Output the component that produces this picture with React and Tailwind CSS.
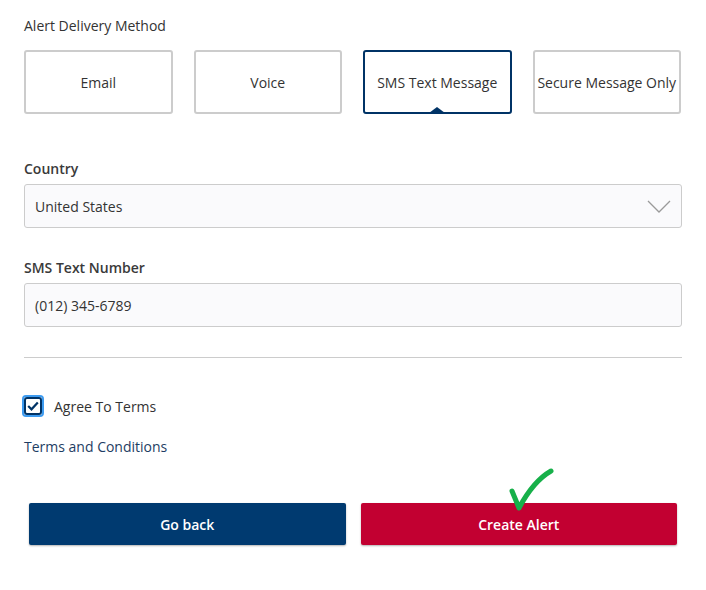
import React, { useState } from 'react';

const methods = ['Email', 'Voice', 'SMS Text Message', 'Secure Message Only'];

const App = () => {
  const [method, setMethod] = useState('SMS Text Message');
  const [agree, setAgree] = useState(true);

  return (
    <div className="w-[706px] h-[590px] bg-white text-[#333333] font-['Open_Sans',sans-serif]">
      <div className="px-6 pt-[16px]">
        <div className="text-[14px] leading-5 h-5">Alert Delivery Method</div>

        {/* Choix du mode de livraison */}
        <div className="mt-[14px] flex gap-[21px] pr-[1px]">
          {methods.map(m => {
            const active = m === method;
            return (
              <button
                key={m}
                onClick={() => setMethod(m)}
                className={
                  active
                    ? 'relative w-[149px] h-[64px] rounded-[3px] border-2 border-[#003366] bg-white text-[14px] text-[#333333] whitespace-nowrap'
                    : 'relative w-[149px] h-[64px] rounded-[3px] border-2 border-[#cccccc] bg-white text-[14px] text-[#333333] whitespace-nowrap'
                }
              >
                {m}
                {active && (
                  <span className="absolute left-1/2 -translate-x-1/2 bottom-[-1px] w-0 h-0 border-l-[8px] border-r-[8px] border-b-[6px] border-l-transparent border-r-transparent border-b-[#003366]" />
                )}
              </button>
            );
          })}
        </div>

        {/* Pays */}
        <div className="mt-[45px] text-[14px] leading-5 h-5 font-semibold text-[#3a3a3a]">Country</div>
        <div className="mt-[5px] h-[44px] rounded-[3px] border border-[#cccccc] bg-[#fafafc] flex items-center justify-between pl-[10px] pr-[10px]">
          <span className="text-[14px]">United States</span>
          <svg width="24" height="13" viewBox="0 0 24 13" fill="none">
            <path d="M1 1 L12 12 L23 1" stroke="#9a9a9a" strokeWidth="1.3" />
          </svg>
        </div>

        {/* Numéro SMS */}
        <div className="mt-[30px] text-[14px] leading-5 h-5 font-semibold text-[#3a3a3a]">SMS Text Number</div>
        <div className="mt-[5px] h-[44px] rounded-[3px] border border-[#cccccc] bg-[#fafafc] flex items-center pl-[10px]">
          <span className="text-[14px]">(012) 345-6789</span>
        </div>

        <div className="mt-[30px] h-px bg-[#cccccc]" />

        {/* Conditions */}
        <div className="mt-[37px] flex items-center">
          <button
            onClick={() => setAgree(!agree)}
            className="w-[22px] h-[22px] -ml-[2px] rounded-[4px] border-2 border-[#3d9bf0] flex items-center justify-center"
          >
            <span className="w-[18px] h-[18px] rounded-[3px] border-2 border-[#003366] bg-white flex items-center justify-center">
              {agree && (
                <svg width="12" height="10" viewBox="0 0 12 10" fill="none">
                  <path d="M1.2 5 L4.5 8.3 L10.8 1.5" stroke="#003366" strokeWidth="2.2" />
                </svg>
              )}
            </span>
          </button>
          <span className="ml-[10px] text-[14px]">Agree To Terms</span>
        </div>
        <div className="mt-[20px] text-[14px] leading-5 text-[#1d3d63]">Terms and Conditions</div>

        {/* Boutons */}
        <div className="mt-[46px] px-[5px] flex gap-[15px]">
          <button className="flex-1 h-[42px] rounded-[2px] bg-[#003a70] text-white text-[14px] font-semibold shadow-[0_1px_2px_rgba(0,0,0,0.3)]">
            Go back
          </button>
          <button className="relative flex-1 h-[42px] rounded-[2px] bg-[#c20031] text-white text-[14px] font-semibold shadow-[0_1px_2px_rgba(0,0,0,0.3)]">
            Create Alert
            <svg className="absolute left-[146px] top-[-35px]" width="48" height="48" viewBox="0 0 48 48" fill="none">
              <path d="M5 23 L12 40 C20 25 30 11 44 3" stroke="#17b04a" strokeWidth="5" strokeLinecap="round" strokeLinejoin="round" />
            </svg>
          </button>
        </div>
      </div>
    </div>
  );
};

export default App;
